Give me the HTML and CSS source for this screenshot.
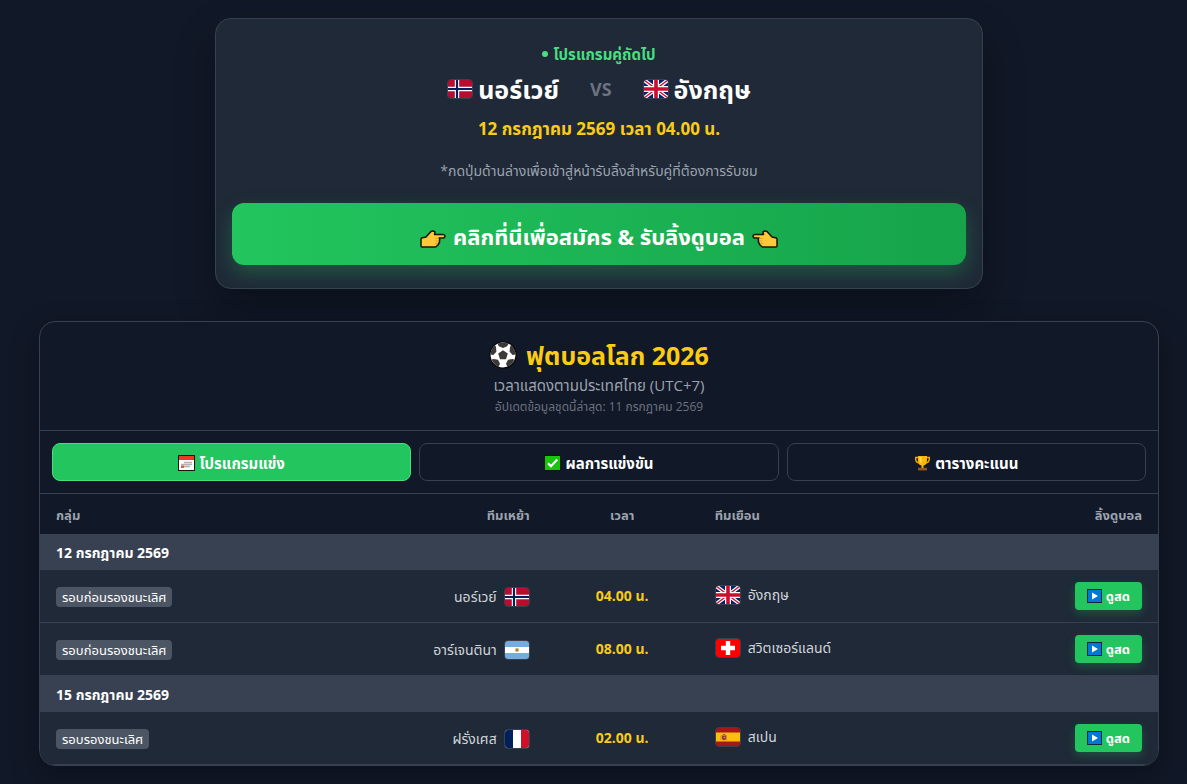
FILE: index.html
```html
<!DOCTYPE html>
<html lang="th">
<head>
    <meta charset="UTF-8">
    <meta name="viewport" content="width=device-width, initial-scale=1.0">
    <title>ฟุตบอลโลก 2026</title>
    <link rel="stylesheet" href="styles.css">
</head>
<body>
    <!-- Flags and icons -->
    <svg class="sprite" aria-hidden="true">
        <symbol id="flag-no" viewBox="0 0 24 18">
            <rect width="24" height="18" fill="#ba0c2f"/>
            <path d="M9 0v18M0 9h24" stroke="#fff" stroke-width="4.4"/>
            <path d="M9 0v18M0 9h24" stroke="#00205b" stroke-width="2.2"/>
        </symbol>
        <symbol id="flag-gb" viewBox="0 0 24 18">
            <rect width="24" height="18" fill="#012169"/>
            <path d="M0 0l24 18M24 0L0 18" stroke="#fff" stroke-width="3.8"/>
            <path d="M0 0l24 18M24 0L0 18" stroke="#c8102e" stroke-width="1.4"/>
            <path d="M12 0v18M0 9h24" stroke="#fff" stroke-width="6"/>
            <path d="M12 0v18M0 9h24" stroke="#c8102e" stroke-width="3.6"/>
        </symbol>
        <symbol id="flag-ar" viewBox="0 0 24 18">
            <rect width="24" height="18" fill="#74acdf"/>
            <rect y="6" width="24" height="6" fill="#fff"/>
            <circle cx="12" cy="9" r="2" fill="#d9a441"/>
            <circle cx="12" cy="9" r="1" fill="#b5772c"/>
        </symbol>
        <symbol id="flag-ch" viewBox="0 0 24 18">
            <rect width="24" height="18" fill="#f00"/>
            <path d="M12 2v14M5 9h14" stroke="#fff" stroke-width="4.4"/>
        </symbol>
        <symbol id="flag-fr" viewBox="0 0 24 18">
            <rect width="24" height="18" fill="#fff"/>
            <rect width="8" height="18" fill="#00205b"/>
            <rect x="16" width="8" height="18" fill="#ce1126"/>
        </symbol>
        <symbol id="flag-es" viewBox="0 0 24 18">
            <rect width="24" height="18" fill="#aa151b"/>
            <rect y="4.5" width="24" height="9" fill="#f9bf0b"/>
            <path d="M5 7v5M10.500 7v5" stroke="#b98a4a" stroke-width="1"/>
            <path d="M6 7.500h4v3.500q-2 2.500-4 0z" fill="#a5342a"/>
            <path d="M6.500 7q1.500-2 3 0z" fill="#8c3a1c"/>
            <circle cx="8.500" cy="9.500" r=".8" fill="#d8a07a"/>
        </symbol>
        <symbol id="icon-hand" viewBox="0 0 26 20">
            <path d="M1.500 9L6 8l5-5.500q2.500-1.200 4 .6L14.500 5.500H23q2.200.3 2 1.800t-2 1.800h-4q1.200 1.200.4 2.600.6 1.400-.6 2.600-.2 1.800-1.600 2.200-.6 1.500-2.200 1.500H2q-1 0-1-1v-7z" fill="#ffc83d" stroke="#1c1505" stroke-width="1.500" stroke-linejoin="round"/>
            <path d="M15.500 9.500H19M15.500 12h3.500M15 14.500h3" stroke="#e39a1d" stroke-width=".9" fill="none"/>
        </symbol>
        <symbol id="icon-ball" viewBox="0 0 28 28">
            <circle cx="14" cy="14" r="13.800" fill="#0a0a0a"/>
            <circle cx="14" cy="14" r="12.400" fill="#fff"/>
            <g fill="#3b3a39">
                <path d="M14 9.200l4.800 3.400-1.800 5.600h-6l-1.800-5.600z"/>
                <path d="M8.600 2.800Q14 .4 19.400 2.800L18.200 5.200 14 7 9.800 5.200z"/>
                <path d="M22 4.300q4.200 3.400 4.600 9.200l-3 .4-3-3.200.4-4.600z"/>
                <path d="M6 4.300q-4.200 3.400-4.600 9.200l3 .4 3-3.200L7 6.100z"/>
                <path d="M25.400 18.500q-2 5-7 7.200l-1.400-2.900 2-4 4.400-.8z"/>
                <path d="M2.600 18.500q2 5 7 7.200l1.400-2.900-2-4-4.400-.8z"/>
            </g>
        </symbol>
        <symbol id="icon-calendar" viewBox="0 0 17 16">
            <rect width="17" height="16" fill="#1b1212"/>
            <rect x="1" y="1" width="15" height="14" fill="#fff"/>
            <rect x="1" y="1" width="15" height="4" fill="#e83b22"/>
            <path d="M6 7.500h8M3 9.500h11M3 11.500h9" stroke="#b5b2b0" stroke-width="1.400"/>
            <path d="M3 10.500h3v2.500H3z" fill="#d8604f"/>
        </symbol>
        <symbol id="icon-check" viewBox="0 0 17 16">
            <rect width="17" height="16" fill="#071a07"/>
            <rect x="1" y="1" width="15" height="14" fill="#16c60c"/>
            <path d="M4 8.200l3 3 6.200-6.700" fill="none" stroke="#fff" stroke-width="2.200"/>
        </symbol>
        <symbol id="icon-trophy" viewBox="0 0 16 16">
            <path d="M4 2.500H1.200v2Q1.500 8 6 8M12 2.500h2.800v2Q14.500 8 10 8" fill="none" stroke="#f5a30a" stroke-width="1.500"/>
            <path d="M3.500 1h9v4q0 5-3.500 5.500V13H7v-2.500Q3.500 10 3.500 5z" fill="#ffb900"/>
            <path d="M5 2h2v6Q5 7 5 4z" fill="#ffdb70"/>
            <rect x="3.500" y="12.800" width="9" height="2.600" fill="#8e562e"/>
        </symbol>
        <symbol id="icon-play" viewBox="0 0 15 14">
            <rect width="15" height="14" fill="#10243c"/>
            <rect x="1" y="1" width="13" height="12" fill="#0078d7"/>
            <path d="M5 3.500v7L11 7z" fill="#fff"/>
        </symbol>
    </svg>

    <main class="page">
        <!-- Next match -->
        <section class="next-match">
            <p class="next-label"><span class="dot"></span>โปรแกรมคู่ถัดไป</p>
            <div class="versus">
                <span class="versus-team"><svg class="flag"><use href="#flag-no"/></svg>นอร์เวย์</span>
                <span class="vs">VS</span>
                <span class="versus-team"><svg class="flag"><use href="#flag-gb"/></svg>อังกฤษ</span>
            </div>
            <p class="next-time">12 กรกฎาคม 2569 เวลา 04.00 น.</p>
            <p class="next-note">*กดปุ่มด้านล่างเพื่อเข้าสู่หน้ารับลิ้งสำหรับคู่ที่ต้องการรับชม</p>
            <a class="cta" href="#">
                <svg class="hand"><use href="#icon-hand"/></svg>
                คลิกที่นี่เพื่อสมัคร &amp; รับลิ้งดูบอล
                <svg class="hand hand-left"><use href="#icon-hand"/></svg>
            </a>
        </section>

        <!-- Schedule -->
        <section class="schedule">
            <header class="schedule-header">
                <h1><svg class="ball"><use href="#icon-ball"/></svg>ฟุตบอลโลก 2026</h1>
                <p class="timezone">เวลาแสดงตามประเทศไทย (UTC+7)</p>
                <p class="updated">อัปเดตข้อมูลชุดนี้ล่าสุด: 11 กรกฎาคม 2569</p>
            </header>

            <nav class="tabs">
                <button class="tab active" type="button"><svg class="tab-icon"><use href="#icon-calendar"/></svg>โปรแกรมแข่ง</button>
                <button class="tab" type="button"><svg class="tab-icon"><use href="#icon-check"/></svg>ผลการแข่งขัน</button>
                <button class="tab" type="button"><svg class="tab-icon"><use href="#icon-trophy"/></svg>ตารางคะแนน</button>
            </nav>

            <table class="matches">
                <thead>
                    <tr>
                        <th class="col-group">กลุ่ม</th>
                        <th class="col-home">ทีมเหย้า</th>
                        <th class="col-time">เวลา</th>
                        <th class="col-away">ทีมเยือน</th>
                        <th class="col-link">ลิ้งดูบอล</th>
                    </tr>
                </thead>
                <tbody>
                    <tr class="date-row"><td colspan="5">12 กรกฎาคม 2569</td></tr>
                    <tr class="match">
                        <td class="col-group"><span class="badge">รอบก่อนรองชนะเลิศ</span></td>
                        <td class="col-home"><span class="team">นอร์เวย์<svg class="flag"><use href="#flag-no"/></svg></span></td>
                        <td class="col-time">04.00 น.</td>
                        <td class="col-away"><span class="team"><svg class="flag"><use href="#flag-gb"/></svg>อังกฤษ</span></td>
                        <td class="col-link"><a class="watch" href="#"><svg class="play"><use href="#icon-play"/></svg>ดูสด</a></td>
                    </tr>
                    <tr class="match">
                        <td class="col-group"><span class="badge">รอบก่อนรองชนะเลิศ</span></td>
                        <td class="col-home"><span class="team">อาร์เจนตินา<svg class="flag"><use href="#flag-ar"/></svg></span></td>
                        <td class="col-time">08.00 น.</td>
                        <td class="col-away"><span class="team"><svg class="flag"><use href="#flag-ch"/></svg>สวิตเซอร์แลนด์</span></td>
                        <td class="col-link"><a class="watch" href="#"><svg class="play"><use href="#icon-play"/></svg>ดูสด</a></td>
                    </tr>
                    <tr class="date-row"><td colspan="5">15 กรกฎาคม 2569</td></tr>
                    <tr class="match">
                        <td class="col-group"><span class="badge">รอบรองชนะเลิศ</span></td>
                        <td class="col-home"><span class="team">ฝรั่งเศส<svg class="flag"><use href="#flag-fr"/></svg></span></td>
                        <td class="col-time">02.00 น.</td>
                        <td class="col-away"><span class="team"><svg class="flag"><use href="#flag-es"/></svg>สเปน</span></td>
                        <td class="col-link"><a class="watch" href="#"><svg class="play"><use href="#icon-play"/></svg>ดูสด</a></td>
                    </tr>
                </tbody>
            </table>
        </section>
    </main>
</body>
</html>
```
FILE: styles.css
```css
* {
    box-sizing: border-box;
}

body {
    margin: 0;
    background-color: #111827;
    color: white;
    font-family: "Segoe UI", "Open Sans", "Noto Sans Thai", Tahoma, sans-serif;
    font-size: 14px;
    line-height: 20px;
}

p, h1 {
    margin: 0;
}

a {
    color: white;
    text-decoration: none;
}

svg {
    flex: none;
}

.sprite {
    position: absolute;
    width: 0;
    height: 0;
}

.page {
    padding: 18px 28px 18px 39px;
}

.flag {
    width: 26px;
    height: 20px;
    border: 1px solid #374151;
    border-radius: 4px;
}

/* Next match */
.next-match {
    max-width: 768px;
    margin: 0 auto 32px;
    padding: 25px 16px 23px;
    background-color: #1f2937;
    border: 1px solid #374151;
    border-radius: 16px;
    box-shadow: 0 20px 40px rgba(0, 0, 0, 0.3);
    text-align: center;
}

.next-label {
    display: flex;
    align-items: center;
    justify-content: center;
    gap: 5px;
    color: #4ade80;
    font-size: 15px;
    font-weight: bold;
}

.dot {
    width: 6px;
    height: 6px;
    border-radius: 50%;
    background-color: #4ade80;
}

.versus {
    display: flex;
    align-items: center;
    justify-content: center;
    gap: 31px;
    margin-top: 9px;
    font-size: 25px;
    font-weight: bold;
    line-height: 32px;
}

.versus-team {
    display: flex;
    align-items: center;
    gap: 5px;
}

.vs {
    color: #6b7280;
    font-size: 18px;
}

.next-time {
    margin-top: 12px;
    color: #facc15;
    font-size: 17px;
    font-weight: bold;
    line-height: 24px;
}

.next-note {
    margin-top: 20px;
    color: #9ca3af;
}

.cta {
    display: flex;
    align-items: center;
    justify-content: center;
    gap: 7px;
    margin-top: 22px;
    padding: 18px 16px 14px;
    border-radius: 12px;
    background: linear-gradient(to right, #22c55e, #16a34a);
    box-shadow: 0 8px 20px rgba(34, 197, 94, 0.3);
    font-size: 22px;
    font-weight: bold;
    line-height: 30px;
}

.hand {
    width: 26px;
    height: 20px;
    margin-top: 6px;
}

.hand-left {
    transform: scaleX(-1);
}

/* Schedule */
.schedule {
    overflow: hidden;
    background-color: #111827;
    border: 1px solid #374151;
    border-radius: 16px;
    box-shadow: 0 10px 30px rgba(0, 0, 0, 0.3);
}

.schedule-header {
    padding: 15px 16px 13px;
    border-bottom: 1px solid #374151;
    text-align: center;
}

.schedule-header h1 {
    display: flex;
    align-items: center;
    justify-content: center;
    gap: 9px;
    color: #facc15;
    font-size: 25px;
    line-height: 36px;
}

.ball {
    width: 28px;
    height: 28px;
}

.timezone {
    margin-top: 2px;
    color: #9ca3af;
    font-size: 15px;
}

.updated {
    margin-top: 2px;
    color: #6b7280;
    font-size: 12px;
}

.tabs {
    display: flex;
    gap: 8px;
    padding: 12px;
    border-bottom: 1px solid #374151;
}

.tab {
    display: flex;
    flex: 1;
    align-items: center;
    justify-content: center;
    gap: 4px;
    padding: 9px 8px 7px;
    border: 1px solid #374151;
    border-radius: 8px;
    background-color: #111827;
    color: white;
    font: inherit;
    font-size: 15px;
    font-weight: bold;
    cursor: pointer;
}

.tab.active {
    background-color: #22c55e;
    border-color: #4ade80;
}

.tab-icon {
    width: 17px;
    height: 16px;
}

.matches {
    width: 100%;
    border-spacing: 0;
    table-layout: fixed;
    background-color: #1f2937;
}

.matches th {
    padding: 11px 16px 9px;
    background-color: #111827;
    color: #9ca3af;
    font-size: 13px;
    text-align: left;
}

.matches td {
    padding: 0 16px;
}

.matches .col-group {
    width: 26%;
}

.matches .col-home {
    width: 215px;
    text-align: right;
}

.matches .col-time {
    width: 153px;
    text-align: center;
}

.matches .col-link {
    width: 120px;
    text-align: right;
}

.date-row td {
    padding: 9px 16px 7px;
    background-color: #374151;
    font-weight: bold;
}

.match td {
    height: 53px;
    border-bottom: 1px solid #374151;
    color: #d1d5db;
}

.match td.col-time {
    color: #facc15;
    font-weight: bold;
}

.match td.col-away {
    padding-bottom: 4px;
}

.team {
    display: inline-flex;
    align-items: center;
    gap: 7px;
    vertical-align: middle;
}

.badge {
    display: inline-block;
    padding: 0 6px;
    border-radius: 4px;
    background-color: #4b5563;
    color: white;
    font-size: 13px;
    vertical-align: middle;
}

.watch {
    display: inline-flex;
    align-items: center;
    gap: 4px;
    padding: 4px 12px;
    border-radius: 4px;
    background-color: #22c55e;
    box-shadow: 0 4px 10px rgba(34, 197, 94, 0.25);
    font-size: 13px;
    font-weight: bold;
    vertical-align: middle;
}

.play {
    width: 15px;
    height: 14px;
}
```
